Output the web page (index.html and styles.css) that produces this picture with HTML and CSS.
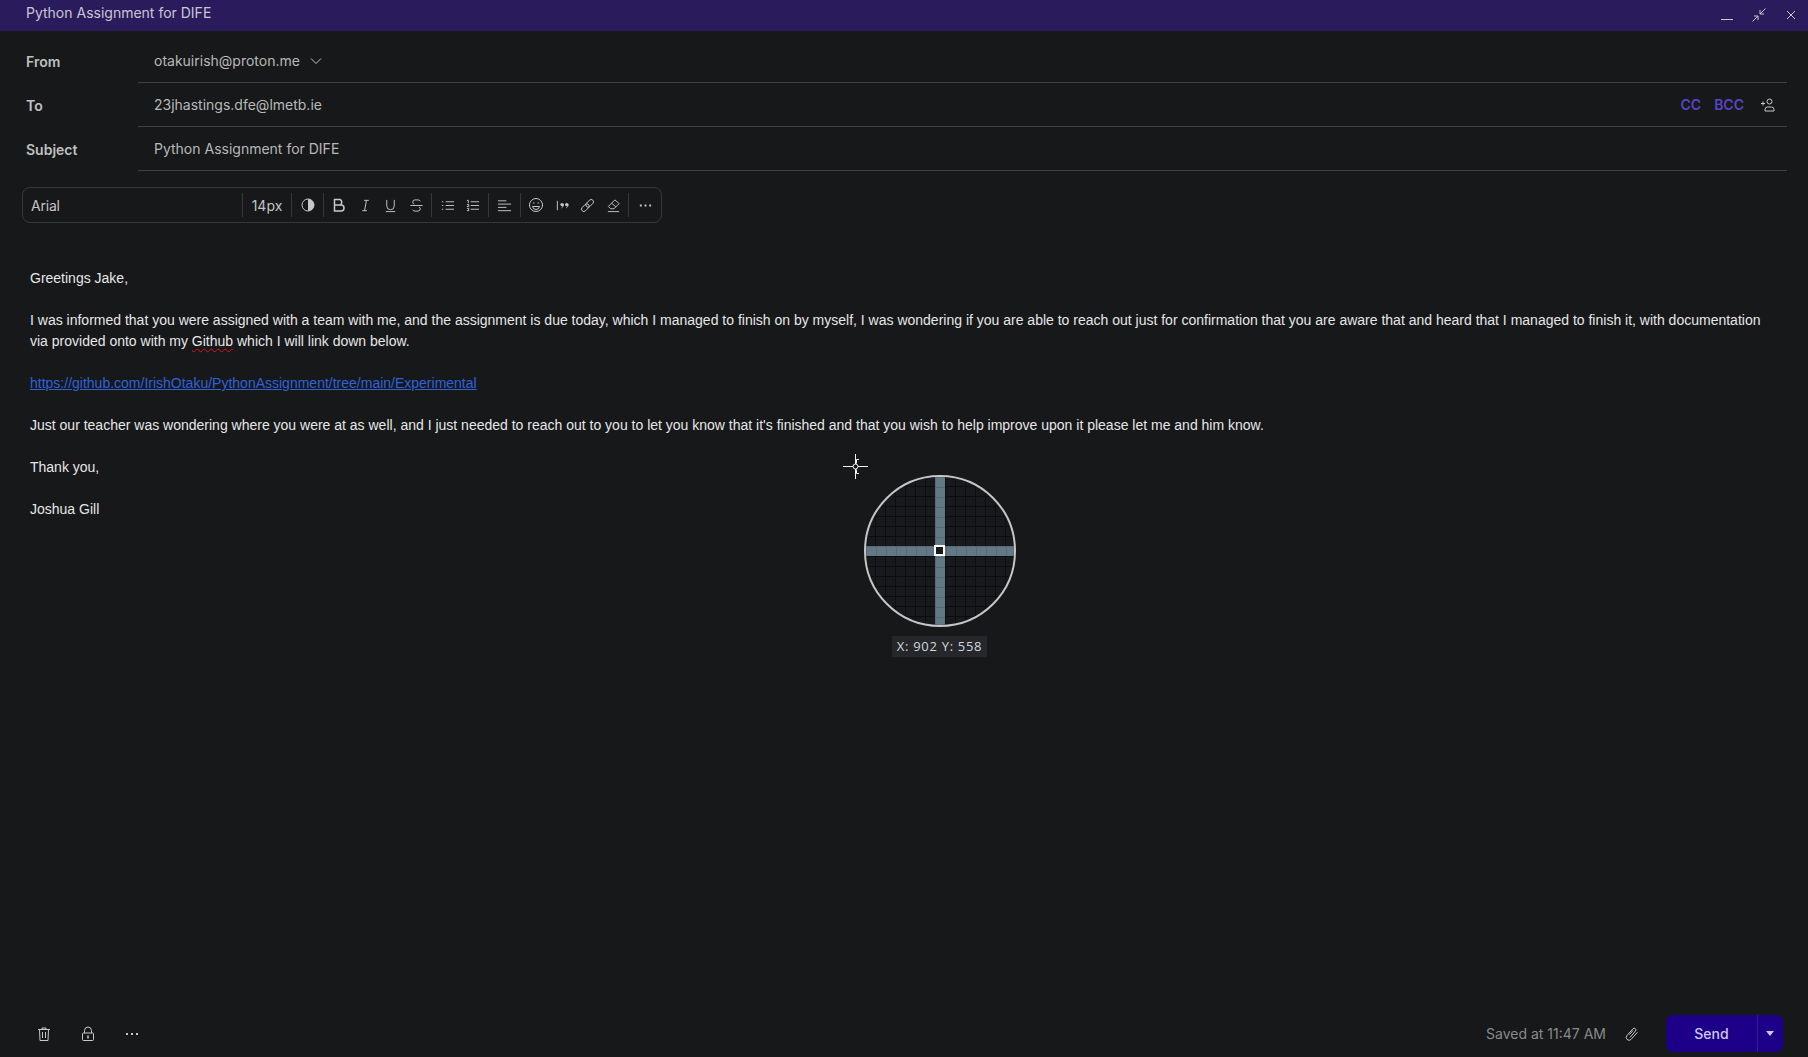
FILE: index.html
```html
<!DOCTYPE html>
<html>
<head>
    <title>Python Assignment for DIFE</title>
    <link rel="stylesheet" href="styles.css">
</head>
<body>
    <div class="titleBar">
        <span>Python Assignment for DIFE</span>
        <div class="windowBtns">
            <svg class="ico" viewBox="0 0 16 16"><path d="M2 12.5h12"/></svg>
            <svg class="ico" viewBox="0 0 16 16"><path d="M14.5 1.5 9 7M9 3v4h4M1.5 14.5 7 9M3 9h4v4"/></svg>
            <svg class="ico" viewBox="0 0 16 16"><path d="M4 4l8 8M12 4l-8 8"/></svg>
        </div>
    </div>

    <div class="headerRow">
        <label>From</label>
        <div class="field">
            <span>otakuirish@proton.me</span>
            <svg class="ico chevron" viewBox="0 0 16 16"><path d="M3 5.5l5 5 5-5"/></svg>
        </div>
    </div>
    <div class="headerRow">
        <label>To</label>
        <div class="field">
            <span class="grow">23jhastings.dfe@lmetb.ie</span>
            <span class="ccLink">CC</span>
            <span class="ccLink">BCC</span>
            <svg class="ico" viewBox="0 0 16 16"><circle cx="9.5" cy="4.5" r="2.5"/><path d="M5 14v-1.5Q5 10 7.5 10h4q2.5 0 2.5 2.5V14zM1 6.5h4M3 4.5v4"/></svg>
        </div>
    </div>
    <div class="headerRow">
        <label>Subject</label>
        <div class="field">
            <span>Python Assignment for DIFE</span>
        </div>
    </div>

    <div class="toolbar">
        <div class="fontPick">Arial</div>
        <div class="sizePick">14px</div>
        <div class="toolGroup contrast">
            <svg class="ico big" viewBox="0 0 16 16"><circle cx="8" cy="8" r="6"/><path class="solid" d="M8 2a6 6 0 0 1 0 12z"/></svg>
        </div>
        <div class="toolGroup wide">
            <svg class="ico big" viewBox="0 0 16 16"><path class="thick" d="M3.5 2.5h5.5a3 3 0 0 1 0 5.5H3.5zM3.5 8H10a3 3 0 0 1 0 6H3.5z"/></svg>
            <svg class="ico" viewBox="0 0 16 16"><path d="M6.5 2.5h5M4.5 13.5h5M9 2.5l-2 11"/></svg>
            <svg class="ico" viewBox="0 0 16 16"><path d="M4 2v6.5a4 4 0 0 0 8 0V2M3 14.5h10"/></svg>
            <svg class="ico" viewBox="0 0 16 16"><path d="M12 3.5Q11.5 2 9.5 2h-3Q4 2 4 4.5 4 6 5.5 6.5M1.5 8h13M10.5 9.5Q12 10 12 11.5 12 14 9.5 14h-3Q4.5 14 4 12.5"/></svg>
        </div>
        <div class="toolGroup">
            <svg class="ico" viewBox="0 0 16 16"><path d="M6 4h9M6 8h9M6 12h9M2 4h1.5M2 8h1.5M2 12h1.5"/></svg>
            <svg class="ico" viewBox="0 0 16 16"><path d="M6 4h9M6 8h9M6 12h9M2 2.5h1.5v3M2 7h2v2H2M2 11h2v2.5H2"/></svg>
        </div>
        <div class="toolGroup contrast">
            <svg class="ico" viewBox="0 0 16 16"><path d="M1 3h9M1 6.5h14M1 10h9M1 13.5h14"/></svg>
        </div>
        <div class="toolGroup wide">
            <svg class="ico big" viewBox="0 0 16 16"><circle cx="8" cy="8" r="6.5"/><path d="M5 6h1.5M9.5 6H11M4.5 9.5h7Q11 12.5 8 12.5T4.5 9.5z"/></svg>
            <svg class="ico" viewBox="0 0 16 16"><path d="M2.5 3v10"/><circle class="solid" cx="7.5" cy="7" r="1.8"/><circle class="solid" cx="12.5" cy="7" r="1.8"/><path d="M9 7q0 2.500-2 3.500M14 7q0 2.500-2 3.500"/></svg>
            <svg class="ico" viewBox="0 0 16 16"><g transform="rotate(45 8 8)"><rect x="5.5" y="0" width="5" height="9.5" rx="2.5"/><rect x="5.5" y="6.5" width="5" height="9.5" rx="2.5"/></g></svg>
            <svg class="ico" viewBox="0 0 16 16"><path d="M5 11.5 2.5 9l7-7 4.5 4-5.5 5.5zM6 5.5l4.5 4M2 14.5h12"/></svg>
        </div>
        <div class="toolGroup more">
            <svg class="ico" viewBox="0 0 16 16"><path class="dots" d="M2 8h2M7 8h2M12 8h2"/></svg>
        </div>
    </div>

    <div class="mailBody">
        <p>Greetings Jake,</p>
        <p>I was informed that you were assigned with a team with me, and the assignment is due today, which I managed to finish on by myself, I was wondering if you are able to reach out just for confirmation that you are aware that and heard that I managed to finish it, with documentation via provided onto with my <span class="spellError">Github</span> which I will link down below.</p>
        <p><a href="#">https://github.com/IrishOtaku/PythonAssignment/tree/main/Experimental</a></p>
        <p>Just our teacher was wondering where you were at as well, and I just needed to reach out to you to let you know that it's finished and that you wish to help improve upon it please let me and him know.</p>
        <p>Thank you,</p>
        <p>Joshua Gill</p>
    </div>

    <div class="footer">
        <div class="footerLeft">
            <svg class="ico foot" viewBox="0 0 16 16"><path d="M2 3.5h12M6 3.5V2h4v1.5M3.5 3.5l.5 11h8l.5-11M6.5 6v6M9.5 6v6"/></svg>
            <svg class="ico foot" viewBox="0 0 16 16"><rect x="2.5" y="7" width="11" height="7.5" rx="1"/><path d="M4.5 7V4.5a3.5 3.5 0 0 1 7 0V7"/><path class="thick" d="M8 9.5v3"/></svg>
            <svg class="ico foot" viewBox="0 0 16 16"><path class="dots" d="M2 8h2M7 8h2M12 8h2"/></svg>
        </div>
        <div class="footerRight">
            <span class="savedAt">Saved at 11:47 AM</span>
            <svg class="ico clip" viewBox="0 0 16 16"><path d="M6 11.5l5.5-6.5a1.7 1.7 0 0 0-2.600-2.200L3 9.5a2.800 2.800 0 0 0 4.200 3.800l6.300-7M5.5 8.5 9 4.5"/></svg>
            <div class="sendBtn">
                <span class="sendLabel">Send</span>
                <span class="sendArrow"></span>
            </div>
        </div>
    </div>

    <!-- screen picker overlay -->
    <svg class="pickCursor" viewBox="0 0 26 26"><path d="M0 12.5h10M15 12.5h10M12.5 0v10M12.5 15v10M16 5.5h-2.500v4M16 19.5h-2.500v-4"/><circle cx="12.5" cy="12.5" r="2.5"/></svg>
    <div class="magnifier">
        <div class="barV"></div>
        <div class="barH"></div>
        <div class="pickPixel"></div>
    </div>
    <div class="coords">X: 902 Y: 558</div>
</body>
</html>
```

FILE: styles.css
```css
html, body {
    height: 100%;
    margin: 0;
    overflow: hidden;
}

body {
    display: flex;
    flex-direction: column;
    background: #16181a;
    color: #c4c4c4;
    font-family: Inter, "Liberation Sans", sans-serif;
    font-size: 14px;
}

.ico {
    width: 16px;
    height: 16px;
    flex: none;
    fill: none;
    stroke: #c8c8c8;
    stroke-width: 1;
}

.ico.big {
    width: 17px;
    height: 17px;
}

.ico .solid {
    fill: #c8c8c8;
    stroke: none;
}

.ico .thick {
    stroke-width: 1.5;
}

.ico .dots {
    stroke-width: 2;
}

.titleBar {
    display: flex;
    align-items: center;
    justify-content: space-between;
    height: 31px;
    flex: none;
    padding: 0 9px 6px 26px;
    box-sizing: border-box;
    background: #2a1c5c;
    color: #c9c7d4;
}

.windowBtns {
    display: flex;
    gap: 16px;
    padding-top: 5px;
}

.headerRow {
    display: flex;
    height: 44px;
    flex: none;
    padding-right: 21px;
}

.titleBar + .headerRow {
    margin-top: 8px;
}

.headerRow label {
    width: 112px;
    padding-left: 26px;
    line-height: 45px;
    font-weight: 600;
    color: #c0c0c0;
}

.field {
    flex: 1;
    display: flex;
    align-items: center;
    gap: 10px;
    padding: 0 11px 0 16px;
    border-bottom: 1px solid #3f4042;
    color: #b8b8b8;
}

.grow {
    flex: 1;
}

.ccLink {
    margin-right: 3px;
    font-weight: 600;
    color: #5a44c6;
}

.ccLink + .ico {
    margin-left: 3px;
}

.chevron {
    margin-left: -2px;
}

.toolbar {
    display: flex;
    align-items: center;
    align-self: flex-start;
    height: 36px;
    box-sizing: border-box;
    margin: 16px 0 0 22px;
    border: 1px solid #36383b;
    border-radius: 8px;
}

.toolbar > div {
    display: flex;
    align-items: center;
    justify-content: center;
    height: 24px;
    box-sizing: border-box;
    border-right: 1px solid #36383b;
}

.toolbar > div:last-child {
    border-right: 0;
}

.toolbar .fontPick {
    width: 220px;
    padding-left: 8px;
    justify-content: flex-start;
    letter-spacing: -0.2px;
}

.sizePick {
    width: 49px;
}

.toolGroup .ico {
    width: 15px;
    height: 15px;
    margin: 0 5.25px;
}

.toolGroup .ico.big {
    width: 16px;
    height: 16px;
}

.toolbar .contrast {
    width: 32px;
}

.toolbar .wide {
    width: 108px;
}

.toolbar .toolGroup:nth-child(4) + .toolGroup {
    width: 57px;
}

.toolbar .more {
    width: 32px;
}

.mailBody {
    flex: 1;
    padding: 45px 30px 0;
    font-family: "Liberation Sans", Arial, sans-serif;
    font-size: 14px;
    line-height: 21px;
    color: #e6e6e6;
}

.mailBody p {
    margin: 0 0 21px;
}

.mailBody a {
    color: #2f62d8;
}

.spellError {
    text-decoration: underline wavy #e0101c;
    text-decoration-thickness: 1px;
    text-underline-offset: 2px;
}

.footer {
    display: flex;
    align-items: center;
    justify-content: space-between;
    flex: none;
    padding: 0 25px 5px 36px;
}

.footerLeft {
    display: flex;
    gap: 28px;
}

.footerRight {
    display: flex;
    align-items: center;
}

.savedAt {
    color: #8a8a8a;
}

.clip {
    margin: 0 26px 0 18px;
}

.sendBtn {
    display: flex;
    width: 117px;
    height: 37px;
    border-radius: 7px;
    background: #1c0088;
    color: #cfc9ee;
    font-weight: 500;
}

.sendLabel {
    flex: 1;
    line-height: 37px;
    text-align: center;
    border-right: 1px solid #2f1a96;
}

.sendArrow {
    position: relative;
    width: 25px;
}

.sendArrow::after {
    content: "";
    position: absolute;
    left: 8px;
    top: 16px;
    border: 4px solid transparent;
    border-top: 5px solid #cfc9ee;
}

.pickCursor {
    position: absolute;
    left: 843px;
    top: 454px;
    width: 26px;
    height: 26px;
    fill: none;
    stroke: #f2f2f2;
    stroke-width: 1;
}

.magnifier {
    position: absolute;
    left: 864px;
    top: 475px;
    width: 152px;
    height: 152px;
    box-sizing: border-box;
    border: 2px solid #c6c6c6;
    border-radius: 50%;
    overflow: hidden;
    background-color: #17191c;
    background-image:
        linear-gradient(to right, #0c0d0e 1px, transparent 1px),
        linear-gradient(to bottom, #0c0d0e 1px, transparent 1px);
    background-size: 10px 10px;
    background-origin: border-box;
    background-position: 1px 1px;
}

.barV, .barH {
    position: absolute;
    background-color: #627985;
    background-image:
        linear-gradient(to right, #566b76 1px, transparent 1px),
        linear-gradient(to bottom, #566b76 1px, transparent 1px);
    background-size: 10px 10px;
}

.barV {
    left: 69px;
    top: 0;
    width: 10px;
    height: 100%;
}

.barH {
    left: 0;
    top: 69px;
    width: 100%;
    height: 10px;
}

.pickPixel {
    position: absolute;
    left: 68px;
    top: 68px;
    width: 11px;
    height: 11px;
    box-sizing: border-box;
    border: 2px solid #fff;
    background: #17191c;
}

.coords {
    position: absolute;
    left: 892px;
    top: 636px;
    width: 95px;
    height: 21px;
    background: #25272a;
    color: #d0d8de;
    font-family: "Open Sans", sans-serif;
    font-size: 13px;
    line-height: 21px;
    letter-spacing: 0.7px;
    text-align: center;
}
```
